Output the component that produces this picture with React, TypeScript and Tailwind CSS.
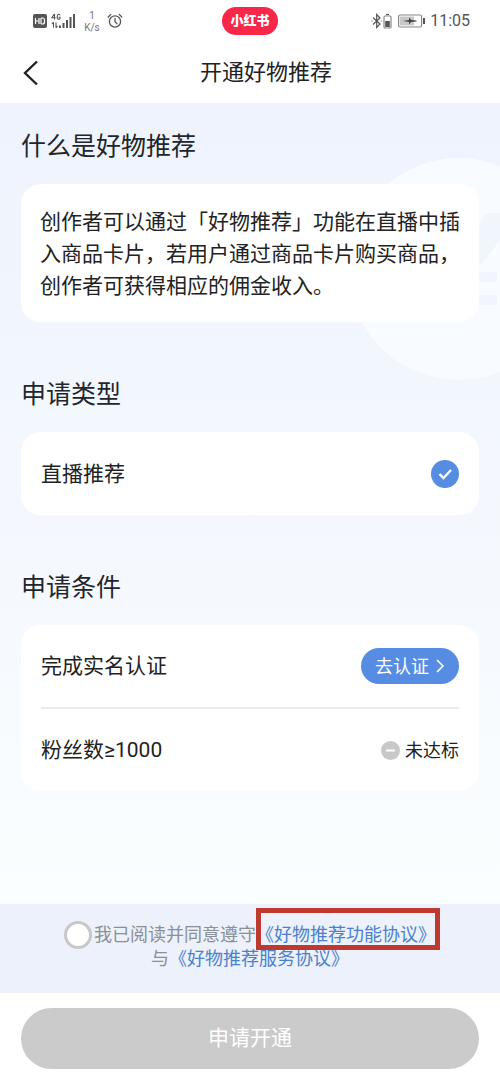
import type { ReactNode } from 'react';

function StatusBar() {
    return (
        <div className="h-[42px] pl-[33px] pr-[30px] flex items-center justify-between relative text-[#555]">
            <div className="flex items-center">
                <svg className="w-[14px] h-[14px]" viewBox="0 0 14 14" fill="none">
                    <rect width="14" height="14" rx="2" fill="#555" />
                    <path d="M2.5 4v6M6 4v6M2.5 7H6M8 4v6M8 4h1.5a2 2 0 0 1 2 2v2a2 2 0 0 1-2 2H8" stroke="#fff" strokeWidth="1.2" />
                </svg>
                <svg className="ml-1 w-6 h-4" viewBox="0 0 24 16" fill="#555">
                    <path d="M3.500 1v5.500M3.400 1L.8 4.800h3.800M9 2.200Q8.500 1.200 7.500 1.200T6.200 3.600T7.500 6.200T9 4.200H7.600" fill="none" stroke="#555" strokeWidth="1.100" />
                    <path d="M2.500 9.500v5M5 9.500v5M1 11l1.500-2M6.500 13l-1.500 2" fill="none" stroke="#555" strokeWidth="1.100" />
                    <rect x="8" y="12.500" width="2" height="2.500" />
                    <rect x="11.500" y="10" width="2" height="5" />
                    <rect x="15" y="7" width="2" height="8" />
                    <rect x="18.500" y="4" width="2" height="11" />
                    <rect x="22" y="1" width="2" height="14" />
                </svg>
                <div className="ml-[7px] pt-0.5 w-5 flex flex-col text-center text-[10px] leading-[12px] text-[#777]">
                    <span>1</span>
                    <span>K/s</span>
                </div>
                <svg className="ml-[5px] w-4 h-4" viewBox="0 0 16 16" fill="none" stroke="#555" strokeWidth="1.300" strokeLinecap="round">
                    <circle cx="8" cy="8.500" r="5.600" />
                    <path d="M8 5.500v3.200l2 2M1.200 4l2.600-2.600M14.800 4l-2.600-2.600" />
                </svg>
            </div>

            <div className="absolute left-1/2 -translate-x-1/2 top-[7px] w-14 h-7 rounded-full bg-[#fb2748] text-white text-[13px] font-black flex items-center justify-center">
                小红书
            </div>

            <div className="flex items-center">
                <svg className="w-[21px] h-4" viewBox="0 0 21 16" fill="none" stroke="#555" strokeWidth="1.200">
                    <path d="M2 4.500l7 6.500-3.300 3.500V1.500L9 5l-7 6.500" />
                    <path d="M.5 8h1M9.800 8h1" />
                    <rect x="13" y="3" width="7" height="12" rx="1" stroke="#888" />
                    <path d="M15 1.500h3" />
                    <rect x="14.200" y="8" width="4.600" height="6" fill="#555" stroke="none" />
                </svg>
                <svg className="ml-[6px] w-[27px] h-[14px]" viewBox="0 0 27 14" fill="none">
                    <rect x=".6" y="1" width="23" height="12" rx="1.500" stroke="#888" strokeWidth="1.200" />
                    <rect x="2" y="2.500" width="14" height="9" fill="#c8c8c8" />
                    <path d="M5 7l6-1V3.500l2.500 2.500 5 .5v1l-5.500.5-2 2.500V8z" fill="#444" />
                    <rect x="25" y="4" width="2" height="6" fill="#555" />
                </svg>
                <span className="ml-[5px] text-[16px] leading-5">11:05</span>
            </div>
        </div>
    );
}

function Section({ title, children }: { title: string; children: ReactNode }) {
    return (
        <section>
            <h2 className="mb-[17px] text-[25px] leading-10 text-[#22262c]">{title}</h2>
            <div className="rounded-[20px] bg-white">{children}</div>
        </section>
    );
}

export default function App() {
    return (
        <div className="min-h-screen flex flex-col bg-white text-[#222] font-[Roboto,'Noto_Sans_CJK_SC',sans-serif]">
            <header>
                <StatusBar />
                <div className="h-[61px] px-5 flex items-center">
                    <button type="button" aria-label="返回" className="w-8">
                        <svg className="w-5 h-7" viewBox="0 0 20 28" fill="none" stroke="#222" strokeWidth="2.400">
                            <path d="M17 2.500L5 14l12 11.500" />
                        </svg>
                    </button>
                    <h1 className="flex-1 text-center text-[22px] leading-8">开通好物推荐</h1>
                </div>
            </header>

            <main className="relative flex-1 overflow-hidden px-[21px] pt-6 pb-10 bg-linear-to-b from-[#eef3fd] via-[#f4f8fe] to-[#fafeff]">
                <svg className="absolute right-0 top-[55px] w-[152px] h-[222px]" viewBox="0 0 152 222">
                    <circle cx="111" cy="111" r="111" fill="#f8fbff" />
                    <path d="M130 72L134 62Q137 55 144 55H152V82L132 108H130z" fill="#f1f6fd" />
                    <path d="M128 114h21v10h-21zM128 137h21v10h-21z" fill="#f1f5fd" />
                </svg>

                <div className="relative flex flex-col gap-[53px]">
                    <Section title="什么是好物推荐">
                        <p className="px-[19px] pt-[22px] pb-5 text-[21px] leading-8">
                            创作者可以通过「好物推荐」功能在直播中插入商品卡片，若用户通过商品卡片购买商品，创作者可获得相应的佣金收入。
                        </p>
                    </Section>

                    <Section title="申请类型">
                        <label className="mx-5 h-[83px] flex items-center justify-between text-[21px]">
                            <span className="pt-0.5">直播推荐</span>
                            <span className="relative w-7 h-7">
                                <input type="checkbox" defaultChecked className="block w-7 h-7 appearance-none rounded-full bg-[#568de3]" />
                                <svg className="absolute inset-0 pointer-events-none" viewBox="0 0 28 28" fill="none" stroke="#fff" strokeWidth="2.400">
                                    <path d="M8.500 14l4 4 7.500-8" />
                                </svg>
                            </span>
                        </label>
                    </Section>

                    <Section title="申请条件">
                        <div className="mx-5 h-[84px] flex items-center justify-between border-b-2 border-[#ebebeb]">
                            <span className="pt-0.5 text-[21px]">完成实名认证</span>
                            <button type="button" className="h-9 pl-[14px] pr-3 flex items-center gap-1 rounded-full bg-[#568de3] text-white text-[18px]">
                                去认证
                                <svg className="w-[14px] h-[14px]" viewBox="0 0 14 14" fill="none" stroke="#fff" strokeWidth="1.600">
                                    <path d="M4 1l6 6-6 6" />
                                </svg>
                            </button>
                        </div>
                        <div className="mx-5 h-[82px] flex items-center justify-between">
                            <span className="pt-0.5 text-[21px]">粉丝数≥1000</span>
                            <span className="flex items-center gap-[5px] text-[18px]">
                                <svg className="w-[19px] h-[19px]" viewBox="0 0 19 19">
                                    <circle cx="9.500" cy="9.500" r="9.500" fill="#c8c8c8" />
                                    <rect x="5" y="8.500" width="9" height="2" fill="#fff" />
                                </svg>
                                未达标
                            </span>
                        </div>
                    </Section>
                </div>
            </main>

            <div className="pt-[19px] pb-[22px] flex flex-col items-center bg-[#ecf1fb] text-[18px] leading-6 text-[#8b8f96]">
                <div className="flex items-center">
                    <input id="agree" type="checkbox" className="-my-1 mr-[2px] w-7 h-7 appearance-none rounded-full border-[3px] border-[#c8c8c8] bg-white" />
                    <label htmlFor="agree">我已阅读并同意遵守</label>
                    <a href="#feature" className="relative text-[#4a80cc]">
                        《好物推荐功能协议》
                        <span className="absolute -top-[15px] left-0 -right-1 -bottom-[3px] z-10 border-[5px] border-[#be3a30]" />
                    </a>
                </div>
                <div>
                    与<a href="#service" className="text-[#4a80cc]">《好物推荐服务协议》</a>
                </div>
            </div>

            <footer className="px-[21px] pt-[15px] pb-[14px]">
                <button type="button" className="w-full h-[61px] rounded-full bg-[#cbcbcb] text-white text-[21px]">申请开通</button>
            </footer>
        </div>
    );
}
